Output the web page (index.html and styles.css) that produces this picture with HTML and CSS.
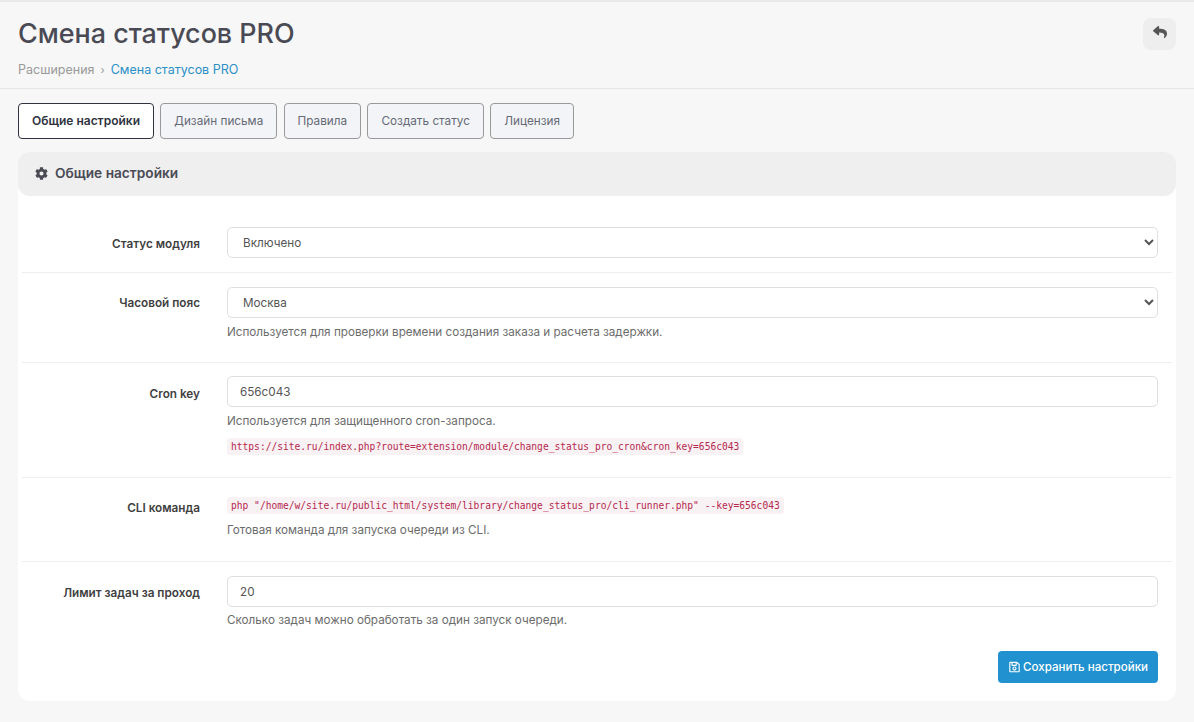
FILE: index.html
```html
<!DOCTYPE html>
<html lang="ru">
<head>
    <meta charset="UTF-8">
    <title>Смена статусов PRO</title>
    <link rel="stylesheet" href="styles.css">
</head>
<body>
    <div class="page-header">
        <div class="head-left">
            <h1>Смена статусов PRO</h1>
            <div class="breadcrumb">
                <span>Расширения</span>
                <span class="sep">›</span>
                <a href="#">Смена статусов PRO</a>
            </div>
        </div>
        <a class="back" href="#">
            <svg width="14" height="14" viewBox="0 0 512 512"><path fill="#555" d="M8.309 189.836L184.313 37.851C199.719 24.546 224 35.347 224 56.015v80.053c160.629 1.839 288 34.032 288 186.258 0 61.441-39.581 122.309-83.333 154.132-13.653 9.931-33.111-2.533-28.077-18.631 45.344-145.012-21.507-183.51-176.59-185.742V360c0 20.700-24.300 31.453-39.687 18.164l-176.004-152c-11.071-9.562-11.086-26.753 0-36.328z"/></svg>
        </a>
    </div>
    <div class="content">
        <div class="tabs">
            <a class="tab active" href="#">Общие настройки</a>
            <a class="tab" href="#">Дизайн письма</a>
            <a class="tab" href="#">Правила</a>
            <a class="tab" href="#">Создать статус</a>
            <a class="tab" href="#">Лицензия</a>
        </div>
        <div class="card">
            <div class="card-head">
                <svg width="13" height="13" viewBox="0 0 512 512"><path fill="#4a4a55" d="M487.4 315.7l-42.6-24.6c4.3-23.2 4.3-47 0-70.2l42.6-24.6c4.9-2.8 7.1-8.6 5.5-14-11.1-35.6-30-67.8-54.7-94.6-3.8-4.100-10-5.100-14.800-2.300L380.800 110c-17.900-15.400-38.500-27.300-60.800-35.100V25.800c0-5.600-3.900-10.500-9.400-11.700-36.700-8.200-74.300-7.800-109.200 0-5.500 1.200-9.400 6.100-9.400 11.700V75c-22.200 7.900-42.800 19.800-60.800 35.100L88.700 85.500c-4.900-2.800-11-1.900-14.800 2.300-24.700 26.700-43.600 58.900-54.700 94.600-1.700 5.400.6 11.200 5.500 14L67.300 221c-4.300 23.200-4.300 47 0 70.200l-42.600 24.600c-4.900 2.800-7.100 8.600-5.500 14 11.100 35.600 30 67.800 54.700 94.600 3.800 4.100 10 5.100 14.800 2.300l42.600-24.600c17.900 15.400 38.500 27.300 60.800 35.100v49.200c0 5.600 3.900 10.500 9.400 11.700 36.700 8.200 74.300 7.800 109.200 0 5.500-1.200 9.400-6.100 9.400-11.700v-49.200c22.200-7.900 42.800-19.800 60.800-35.100l42.600 24.600c4.900 2.800 11 1.900 14.800-2.300 24.700-26.700 43.600-58.900 54.700-94.600 1.500-5.500-.7-11.300-5.600-14.100zM256 336c-44.100 0-80-35.900-80-80s35.900-80 80-80 80 35.900 80 80-35.900 80-80 80z"/></svg>
                <span>Общие настройки</span>
            </div>
            <div class="card-body">
                <div class="form-row first">
                    <label class="row-label">Статус модуля</label>
                    <div class="row-field">
                        <select class="control"><option>Включено</option></select>
                    </div>
                </div>
                <div class="form-row zone">
                    <label class="row-label">Часовой пояс</label>
                    <div class="row-field">
                        <select class="control"><option>Москва</option></select>
                        <div class="help">Используется для проверки времени создания заказа и расчета задержки.</div>
                    </div>
                </div>
                <div class="form-row cron">
                    <label class="row-label">Cron key</label>
                    <div class="row-field">
                        <input class="control" type="text" value="656c043">
                        <div class="help">Используется для защищенного cron-запроса.</div>
                        <div class="code-line"><code>https://site.ru/index.php?route=extension/module/change_status_pro_cron&amp;cron_key=656c043</code></div>
                    </div>
                </div>
                <div class="form-row cli">
                    <label class="row-label">CLI команда</label>
                    <div class="row-field">
                        <div><code>php "/home/w/site.ru/public_html/system/library/change_status_pro/cli_runner.php" --key=656c043</code></div>
                        <div class="help">Готовая команда для запуска очереди из CLI.</div>
                    </div>
                </div>
                <div class="form-row last">
                    <label class="row-label">Лимит задач за проход</label>
                    <div class="row-field">
                        <input class="control" type="text" value="20">
                        <div class="help">Сколько задач можно обработать за один запуск очереди.</div>
                    </div>
                </div>
                <div class="actions">
                    <button class="btn-save" type="button">
                        <svg width="11" height="12" viewBox="0 0 448 512"><path fill="#fff" d="M433.941 129.941l-83.882-83.882A48 48 0 0 0 316.118 32H48C21.490 32 0 53.490 0 80v352c0 26.510 21.490 48 48 48h352c26.510 0 48-21.490 48-48V163.882a48 48 0 0 0-14.059-33.941zM272 80v80H144V80h128zm122 352H54a6 6 0 0 1-6-6V86a6 6 0 0 1 6-6h42v104c0 13.255 10.745 24 24 24h176c13.255 0 24-10.745 24-24V83.882l78.243 78.243a6 6 0 0 1 1.757 4.243V426a6 6 0 0 1-6 6zM224 232c-48.523 0-88 39.477-88 88s39.477 88 88 88 88-39.477 88-88-39.477-88-88-88zm0 128c-22.056 0-40-17.944-40-40s17.944-40 40-40 40 17.944 40 40-17.944 40-40 40z"/></svg>
                        Сохранить настройки
                    </button>
                </div>
            </div>
        </div>
    </div>
</body>
</html>
```

FILE: styles.css
```css
html, body {
    margin: 0;
    padding: 0;
}
body {
    background: #f7f7f7;
    border-top: 2px solid #e9e9e9;
    font-family: Inter, "Noto Sans", sans-serif;
    font-size: 12.5px;
    color: #4a4a55;
}
a {
    text-decoration: none;
}
.page-header {
    display: flex;
    justify-content: space-between;
    align-items: flex-start;
    height: 86px;
    padding: 0 18px;
    border-bottom: 1px solid #e6e6e6;
}
h1 {
    margin: 14px 0 0 0;
    font-size: 26.9px;
    line-height: 34px;
    font-weight: 500;
    color: #4a4a55;
}
.breadcrumb {
    margin-top: 11px;
    line-height: 18px;
    color: #999;
}
.breadcrumb .sep {
    margin: 0 2.5px;
    font-size: 11px;
}
.breadcrumb a {
    color: #2b8fc7;
}
.back {
    display: flex;
    align-items: center;
    justify-content: center;
    width: 33px;
    height: 32px;
    margin-top: 16px;
    border-radius: 8px;
    background: #eeeeee;
    padding-bottom: 4px;
    box-sizing: border-box;
}
.content {
    padding: 14px 18px 21px 18px;
}
.tabs {
    display: flex;
    gap: 6.3px;
    margin-bottom: 13px;
}
.tab {
    height: 36px;
    box-sizing: border-box;
    padding: 0 13px;
    line-height: 34px;
    border: 1px solid #999;
    border-radius: 4px;
    background: #f3f4f8;
    color: #666a75;
    font-size: 11.75px;
}
.tab.active {
    background: #fff;
    border-color: #2f3340;
    color: #2f3340;
    font-size: 12px;
    font-weight: 600;
}
.card {
    background: #fff;
    border-radius: 12px;
}
.card-head {
    display: flex;
    align-items: center;
    gap: 7px;
    height: 42px;
    padding: 0 17px 2px 17px;
    background: #efefef;
    border-radius: 12px;
    font-size: 13.7px;
    font-weight: 600;
}
.card-body {
    padding: 16px 4px 18px 4px;
}
.form-row {
    display: flex;
    gap: 27px;
    padding: 14px 14px 22px 0;
    border-bottom: 1px solid #eeeeee;
}
.form-row.first {
    padding: 15px 14px 14px 0;
}
.form-row.cron {
    padding: 13px 14px 22px 0;
}
.form-row.cli {
    padding: 19px 14px 23px 0;
}
.form-row.last {
    border-bottom: 0;
    padding-bottom: 0;
}
.row-label {
    width: 178px;
    flex-shrink: 0;
    padding-top: 9px;
    text-align: right;
    font-size: 11.75px;
    line-height: 16px;
    font-weight: 600;
    color: #3f3f3f;
}
.zone .row-label {
    padding-top: 8px;
}
.cron .row-label {
    padding-top: 10px;
}
.cli .row-label {
    padding-top: 3px;
}
.row-field {
    flex: 1;
    min-width: 0;
}
.control {
    display: block;
    width: 100%;
    height: 31px;
    box-sizing: border-box;
    padding: 0 12px;
    border: 1px solid #dedfe3;
    border-radius: 5px;
    background-color: #fff;
    font-family: Inter, "Noto Sans", sans-serif;
    font-size: 11.7px;
    color: #555;
}
select.control {
    padding-left: 11px;
}
.help {
    margin-top: 6px;
    font-size: 11.7px;
    line-height: 16px;
    color: #6c6c6c;
}
.last .help {
    margin-top: 5px;
}
.code-line {
    margin-top: 9px;
}
code {
    display: inline-block;
    padding: 0 4px;
    line-height: 17px;
    border-radius: 3px;
    background: #f9f2f4;
    color: #b5284e;
    font-family: "DejaVu Sans Mono", "Liberation Mono", monospace;
    font-size: 9.6px;
}
.cli .help {
    margin-top: 8px;
}
.actions {
    display: flex;
    justify-content: flex-end;
    padding: 23px 14px 0 0;
}
.btn-save {
    height: 32px;
    padding: 0 10px 0 11px;
    border: 0;
    border-radius: 4px;
    background: #2191cf;
    color: #fff;
    font-family: Inter, "Noto Sans", sans-serif;
    font-size: 11.55px;
    font-weight: 500;
}
.btn-save svg {
    vertical-align: -2px;
}
```
